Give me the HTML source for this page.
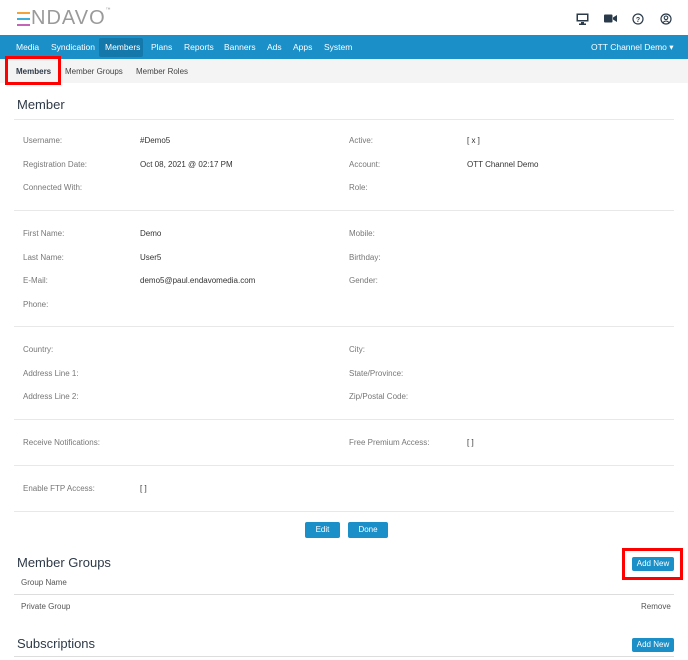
<!DOCTYPE html>
<html><head><meta charset="utf-8"><style>
*{margin:0;padding:0;box-sizing:border-box}
body{width:688px;height:660px;overflow:hidden;background:#fff;font-family:"Liberation Sans",sans-serif;position:relative;color:#333}
.a{position:absolute;white-space:nowrap}
.lbl{font-size:8px;color:#777}
.val{font-size:8px;color:#333}
.sep{position:absolute;left:14px;width:660px;height:1px;background:#e8e8e8}
.nav span{position:absolute;top:42px;font-size:8.5px;color:#fff}
.btn{position:absolute;background:#1a8fc8;color:#fff;font-size:8px;text-align:center;border-radius:2px}
h2{position:absolute;font-weight:normal;color:#2e3a48}
</style></head><body>
<!-- logo -->
<div class="a" style="left:17px;top:12px;width:13px;height:14px">
<div style="position:absolute;top:0;left:0;width:13px;height:2px;background:#f2a33a"></div>
<div style="position:absolute;top:6px;left:0;width:13px;height:2px;background:#3bb0d8"></div>
<div style="position:absolute;top:12px;left:0;width:13px;height:2px;background:#c565b8"></div>
</div>
<div class="a" style="left:31px;top:7px;font-size:20px;color:#9a9a9a;letter-spacing:1px;font-weight:300">NDAVO<span style="font-size:5px;vertical-align:top">™</span></div>
<!-- icons -->
<svg class="a" style="left:576px;top:13px" width="13" height="12" viewBox="0 0 13 12"><rect x="0.5" y="0.5" width="12" height="8" fill="#2a3a4a"/><rect x="2" y="2" width="9" height="5" fill="#fff"/><rect x="5" y="9" width="3" height="2" fill="#2a3a4a"/><rect x="3" y="10.5" width="7" height="1.5" fill="#2a3a4a"/></svg>
<svg class="a" style="left:604px;top:14px" width="13" height="9" viewBox="0 0 13 9"><rect x="0" y="0.5" width="8.5" height="8" rx="1" fill="#2a3a4a"/><path d="M9 3.5 L13 1 L13 8 L9 5.5Z" fill="#2a3a4a"/></svg>
<svg class="a" style="left:632px;top:13px" width="12" height="12" viewBox="0 0 12 12"><circle cx="6" cy="6" r="5" fill="none" stroke="#2a3a4a" stroke-width="1.2"/><text x="6" y="8.8" font-size="7" text-anchor="middle" fill="#2a3a4a" font-family="Liberation Sans" font-weight="bold">?</text></svg>
<svg class="a" style="left:660px;top:13px" width="12" height="12" viewBox="0 0 12 12"><circle cx="6" cy="6" r="5" fill="none" stroke="#2a3a4a" stroke-width="1.2"/><circle cx="6" cy="4.8" r="1.8" fill="none" stroke="#2a3a4a" stroke-width="1.1"/><path d="M3 9.5 Q6 6.5 9 9.5" fill="none" stroke="#2a3a4a" stroke-width="1.1"/></svg>
<!-- nav -->
<div class="a nav" style="left:0;top:35px;width:688px;height:24px;background:#1a8fc8">
</div>
<div class="a" style="left:99px;top:38px;width:44px;height:19px;background:#1478ab;border-radius:2px"></div>
<div class="nav">
<span style="left:16px">Media</span><span style="left:51px">Syndication</span><span style="left:105px">Members</span><span style="left:151px">Plans</span><span style="left:184px">Reports</span><span style="left:224px">Banners</span><span style="left:267px">Ads</span><span style="left:293px">Apps</span><span style="left:324px">System</span><span style="left:591px">OTT Channel Demo ▾</span>
</div>
<!-- subnav -->
<div class="a" style="left:0;top:59px;width:688px;height:24px;background:#f4f4f4"></div>
<div class="a" style="left:5px;top:56px;width:56px;height:29px;border:3px solid #f00"></div>
<div class="a" style="left:16px;top:67px;font-size:8px;font-weight:bold;color:#2e3a48">Members</div>
<div class="a" style="left:65px;top:67px;font-size:8px;color:#444">Member Groups</div>
<div class="a" style="left:136px;top:67px;font-size:8px;color:#444">Member Roles</div>
<h2 style="left:17px;top:97px;font-size:13px">Member</h2>
<div class="sep" style="top:119px"></div>
<div class="a lbl" style="left:23px;top:136px">Username:</div><div class="a val" style="left:140px;top:136px">#Demo5</div>
<div class="a lbl" style="left:349px;top:136px">Active:</div><div class="a val" style="left:467px;top:136px">[ x ]</div>
<div class="a lbl" style="left:23px;top:160px">Registration Date:</div><div class="a val" style="left:140px;top:160px">Oct 08, 2021 @ 02:17 PM</div>
<div class="a lbl" style="left:349px;top:160px">Account:</div><div class="a val" style="left:467px;top:160px">OTT Channel Demo</div>
<div class="a lbl" style="left:23px;top:183px">Connected With:</div><div class="a lbl" style="left:349px;top:183px">Role:</div>
<div class="sep" style="top:210px"></div>
<div class="a lbl" style="left:23px;top:229px">First Name:</div><div class="a val" style="left:140px;top:229px">Demo</div><div class="a lbl" style="left:349px;top:229px">Mobile:</div>
<div class="a lbl" style="left:23px;top:253px">Last Name:</div><div class="a val" style="left:140px;top:253px">User5</div><div class="a lbl" style="left:349px;top:253px">Birthday:</div>
<div class="a lbl" style="left:23px;top:276px">E-Mail:</div><div class="a val" style="left:140px;top:276px">demo5@paul.endavomedia.com</div><div class="a lbl" style="left:349px;top:276px">Gender:</div>
<div class="a lbl" style="left:23px;top:300px">Phone:</div>
<div class="sep" style="top:326px"></div>
<div class="a lbl" style="left:23px;top:345px">Country:</div><div class="a lbl" style="left:349px;top:345px">City:</div>
<div class="a lbl" style="left:23px;top:369px">Address Line 1:</div><div class="a lbl" style="left:349px;top:369px">State/Province:</div>
<div class="a lbl" style="left:23px;top:392px">Address Line 2:</div><div class="a lbl" style="left:349px;top:392px">Zip/Postal Code:</div>
<div class="sep" style="top:419px"></div>
<div class="a lbl" style="left:23px;top:438px">Receive Notifications:</div><div class="a lbl" style="left:349px;top:438px">Free Premium Access:</div><div class="a val" style="left:467px;top:438px">[ ]</div>
<div class="sep" style="top:465px"></div>
<div class="a lbl" style="left:23px;top:484px">Enable FTP Access:</div><div class="a val" style="left:140px;top:484px">[ ]</div>
<div class="sep" style="top:511px"></div>
<div class="btn" style="left:305px;top:522px;width:35px;height:16px;line-height:16px">Edit</div>
<div class="btn" style="left:348px;top:522px;width:40px;height:16px;line-height:16px">Done</div>
<h2 style="left:17px;top:555px;font-size:13px">Member Groups</h2>
<div class="a" style="left:622px;top:548px;width:61px;height:32px;border:3px solid #f00"></div>
<div class="btn" style="left:632px;top:557px;width:42px;height:14px;line-height:14px">Add New</div>
<div class="a" style="left:21px;top:578px;font-size:8px;color:#555">Group Name</div>
<div class="sep" style="top:594px;height:1px;background:#ddd"></div>
<div class="a val" style="left:21px;top:602px;color:#555">Private Group</div>
<div class="a val" style="left:641px;top:602px;color:#555">Remove</div>
<h2 style="left:17px;top:636px;font-size:13px">Subscriptions</h2>
<div class="btn" style="left:632px;top:638px;width:42px;height:14px;line-height:14px">Add New</div>
<div class="sep" style="top:656px;background:#ddd"></div>
</body></html>
